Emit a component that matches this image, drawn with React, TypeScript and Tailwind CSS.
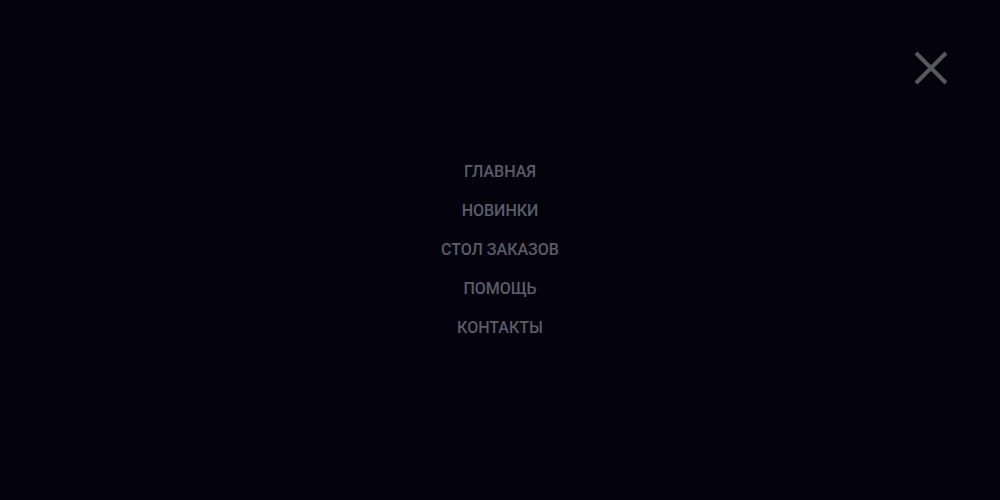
import { useState } from "react"

const links = ["ГЛАВНАЯ", "НОВИНКИ", "СТОЛ ЗАКАЗОВ", "ПОМОЩЬ", "КОНТАКТЫ"]

const App = () => {
    const [open, setOpen] = useState(true)

    return (
        <div className="relative w-full h-[500px] bg-[#03020d] font-['Roboto',sans-serif]">
            <button
                onClick={() => setOpen(!open)}
                className="absolute top-[50px] right-[51px] w-9 h-9 flex items-center justify-center"
            >
                <svg width="36" height="36" viewBox="0 0 36 36" fill="none">
                    <path d="M3 3L33 33M33 3L3 33" stroke="#56575f" strokeWidth="4" />
                </svg>
            </button>
            <nav className="h-full flex items-center justify-center">
                <ul className="flex flex-col items-center gap-[15px]">
                    {links.map((l) => (
                        <li key={l}>
                            <a href="#" className="block text-base leading-6 font-medium text-[#5b5c67]">
                                {l}
                            </a>
                        </li>
                    ))}
                </ul>
            </nav>
        </div>
    )
}

export default App
